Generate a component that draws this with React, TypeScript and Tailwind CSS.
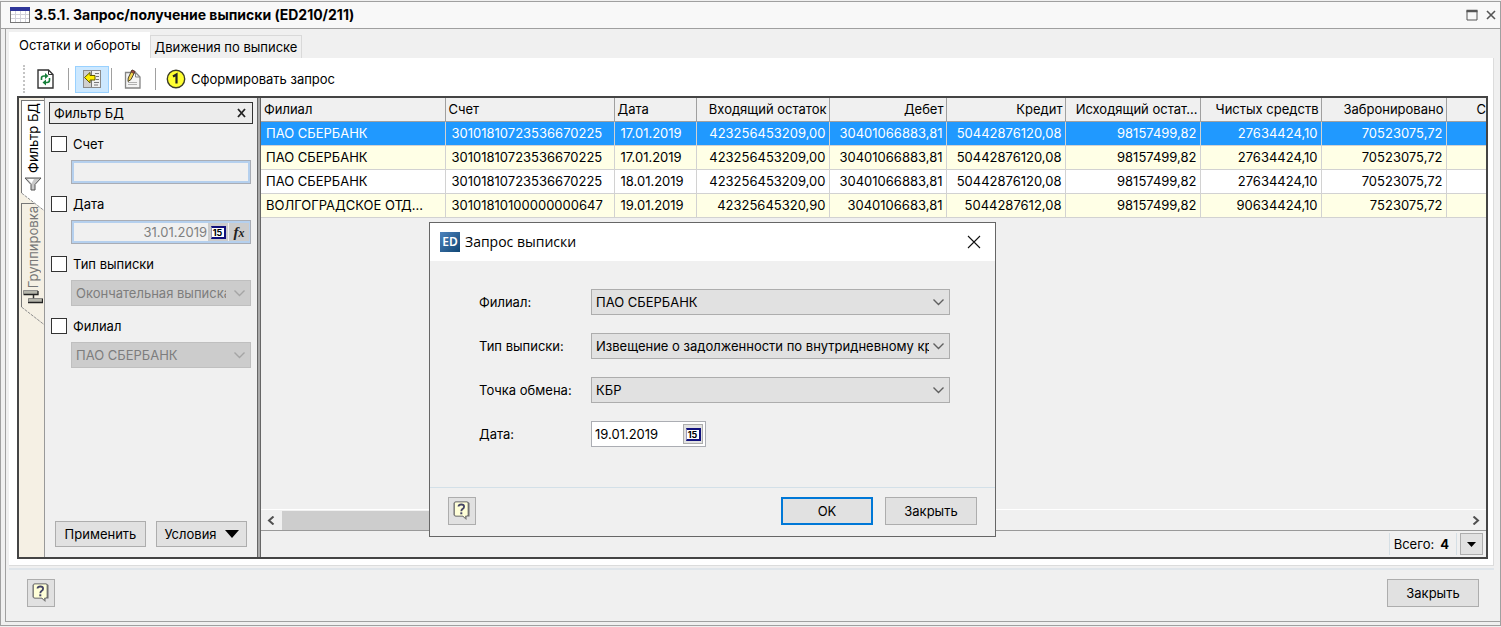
import React, { useState } from "react";

const FONT = "font-['Inter','Noto_Sans',sans-serif] text-[13px] leading-4";
const BUTTON = "flex items-center justify-center border border-[#adadad] bg-[#e1e1e1]";

type Row = { branch: string; values: string[] };

const COLUMNS = [
  { title: "Филиал", width: "w-[184px]" },
  { title: "Счет", width: "w-[169px]" },
  { title: "Дата", width: "w-[82px]" },
  { title: "Входящий остаток", width: "w-[133px]" },
  { title: "Дебет", width: "w-[117px]" },
  { title: "Кредит", width: "w-[119px]" },
  { title: "Исходящий остат...", width: "w-[135px]" },
  { title: "Чистых средств", width: "w-[121px]" },
  { title: "Забронировано", width: "w-[125px]" },
];

const ROWS: Row[] = [
  { branch: "ПАО СБЕРБАНК", values: ["30101810723536670225", "17.01.2019", "423256453209,00", "30401066883,81", "50442876120,08", "98157499,82", "27634424,10", "70523075,72"] },
  { branch: "ПАО СБЕРБАНК", values: ["30101810723536670225", "17.01.2019", "423256453209,00", "30401066883,81", "50442876120,08", "98157499,82", "27634424,10", "70523075,72"] },
  { branch: "ПАО СБЕРБАНК", values: ["30101810723536670225", "18.01.2019", "423256453209,00", "30401066883,81", "50442876120,08", "98157499,82", "27634424,10", "70523075,72"] },
  { branch: "ВОЛГОГРАДСКОЕ ОТД...", values: ["30101810100000000647", "19.01.2019", "42325645320,90", "3040106683,81", "5044287612,08", "98157499,82", "90634424,10", "7523075,72"] },
];

function TableIcon() {
  return (
    <svg width="20" height="16" viewBox="0 0 20 16" shapeRendering="crispEdges">
      <rect x="0.5" y="0.5" width="19" height="15" fill="#fff" stroke="#777" />
      <rect x="0" y="0" width="20" height="4" fill="#2f3699" />
      <path d="M1 7.5h18M1 11.5h18M5.5 4v11M10.5 4v11M15.5 4v11" stroke="#d2d2da" />
    </svg>
  );
}

function RefreshIcon() {
  return (
    <svg width="17" height="20" viewBox="0 0 17 20">
      <path d="M1 1h10.500l4.500 4.500V19H1z" fill="#fff" stroke="#333" strokeWidth="1.400" />
      <path d="M11.500 1v4.500H16" fill="none" stroke="#333" />
      <path d="M4.500 11V9Q4.500 7 7 7h1" fill="none" stroke="#17803a" strokeWidth="1.600" />
      <path d="M8 4l3.500 3L8 10z" fill="#17803a" />
      <path d="M12.500 9v2q0 2.500-2.500 2.500H9" fill="none" stroke="#17803a" strokeWidth="1.600" />
      <path d="M9 10.500l-3.500 3L9 16.500z" fill="#17803a" />
    </svg>
  );
}

function PanelIcon() {
  return (
    <svg width="20" height="20" viewBox="0 0 20 20">
      <rect x="1.500" y="1.500" width="17" height="17" fill="#cfcfcf" stroke="#8a8a8a" />
      <rect x="10" y="2" width="8" height="16" fill="#f0f0f0" />
      <path d="M9.500 2v16" stroke="#777" />
      <path d="M13 4.500h4M14 7.500h3M14 10.500h3M12 13.500h5M12 16h4" stroke="#777" />
      <path d="M2.500 8.500L8 3.500V6.500h5v4.500H8v3z" fill="#ffee00" stroke="#5e5800" />
    </svg>
  );
}

function EditIcon() {
  return (
    <svg width="18" height="20" viewBox="0 0 18 20">
      <path d="M1.500 3.500h10l4.500 4.500v11H1.500z" fill="#f4f4f4" stroke="#858585" strokeWidth="1.300" />
      <path d="M11.500 3.500V8H16" fill="none" stroke="#858585" />
      <path d="M4 13.500h9M4 15.500h9" stroke="#b0b0b0" />
      <path d="M8 1l3 1.500-4 8L4 12.500 4.200 9z" fill="#f3d44a" stroke="#4d4630" />
      <path d="M8 1l3 1.500-1 2L7 3z" fill="#a34b3f" stroke="#4d3030" strokeWidth="0.700" />
    </svg>
  );
}

function OneIcon() {
  return (
    <svg width="20" height="20" viewBox="0 0 20 20">
      <circle cx="10" cy="10" r="8.700" fill="#ffff32" stroke="#3c3c28" strokeWidth="1.400" />
      <path d="M7 7.500L10.500 5.500V14.500" fill="none" stroke="#222" strokeWidth="2.200" />
    </svg>
  );
}

function HelpIcon() {
  return (
    <svg width="20" height="22" viewBox="0 0 20 22">
      <path d="M3 1.500h12.500L17.500 3v13.500h-3V20l-4-3.500H3L1.500 15V3z" fill="#6f6f6f" />
      <path d="M3.500 2h11.500L16 3v12l-1 1h-1.500v2.500L11 16H3.500l-1-1V3z" fill="#ffffd8" stroke="#777" strokeWidth="0.800" />
      <path d="M6.500 6.500Q6.500 4.500 9.300 4.500t2.800 2.300q0 1.300-1.600 2.200Q9.300 9.800 9.300 11.200" fill="none" stroke="#444466" strokeWidth="1.800" />
      <rect x="8.300" y="12.300" width="2" height="2" fill="#444466" />
    </svg>
  );
}

function CalendarIcon() {
  return (
    <span className="flex h-[13px] w-[15px] items-center justify-center border-y-2 border-l border-r-2 border-[#10107c] border-l-[#9999bb] bg-white text-[9px] font-bold leading-none text-black">
      15
    </span>
  );
}

function FunnelIcon() {
  return (
    <svg width="18" height="14" viewBox="0 0 18 14">
      <path d="M1 1h16l-6 6.500V13H7V7.500z" fill="#c9c9c9" stroke="#555" />
      <path d="M4 2h6L7.500 6.500z" fill="#fff" />
    </svg>
  );
}

function GroupIcon() {
  return (
    <svg width="20" height="14" viewBox="0 0 20 14">
      <path d="M10.500 4v5" fill="none" stroke="#333" strokeWidth="1.500" />
      <path d="M1 1h14v4H1z" fill="#b5b5ab" />
      <path d="M0.500 4.500h14.500V1" fill="none" stroke="#222" strokeWidth="1.300" />
      <path d="M5 8.500h14v4H5z" fill="#b5b5ab" />
      <path d="M5 12.500h14.500V8.500" fill="none" stroke="#222" strokeWidth="1.300" />
      <path d="M0.500 4V0.500h14.500M5.500 12V8.500h14" fill="none" stroke="#777" strokeWidth="0.800" />
    </svg>
  );
}

function Chevron({ className }: { className: string }) {
  return (
    <svg className={`pointer-events-none absolute right-1.5 top-2.5 ${className}`} width="11" height="8" viewBox="0 0 11 8">
      <path d="M0.500 0.500L5.500 5.500L10.500 0.500" fill="none" stroke="currentColor" strokeWidth="1.400" />
    </svg>
  );
}

function SlantEdge() {
  return (
    <svg className="block" width="23" height="18" viewBox="0 0 23 18">
      <path d="M0 0H23V18z" fill="currentColor" />
      <path d="M0.500 0L23 17.500" stroke="#8c8c8c" strokeDasharray="3 1" />
    </svg>
  );
}

function FilterCheck({ id, label }: { id: string; label: string }) {
  return (
    <div className="mt-3 flex h-4 items-center gap-1.5">
      <input id={id} type="checkbox" className="m-0 size-4 appearance-none border border-[#333] bg-white checked:bg-[#555]" />
      <label htmlFor={id}>{label}</label>
    </div>
  );
}

function FilterSelect({ label, value }: { label: string; value: string }) {
  return (
    <div className="relative ml-5 mt-2 h-[26px]">
      <select aria-label={label} disabled className="h-full w-full appearance-none border border-[#bfbfbf] bg-[#ccc] pl-1 pr-6 text-[#7d7d7d] opacity-100">
        <option>{value}</option>
      </select>
      <Chevron className="text-[#a5a5a5]" />
    </div>
  );
}

function DialogSelect({ id, label, value }: { id: string; label: string; value: string }) {
  return (
    <>
      <label htmlFor={id}>{label}</label>
      <div className="relative h-[26px]">
        <select id={id} className="h-full w-full appearance-none border border-[#adadad] bg-[#e1e1e1] pl-1 pr-5 text-black">
          <option>{value}</option>
        </select>
        <Chevron className="text-[#606060]" />
      </div>
    </>
  );
}

function Toolbar() {
  return (
    <div className="flex h-[38px] items-center pl-[14px] pt-1">
      <span className="h-7 border-l-2 border-dotted border-[#c4c4c4]" />
      <button aria-label="Обновить" className="ml-3"><RefreshIcon /></button>
      <span className="ml-3.5 h-[22px] w-px bg-[#a0a0a0]" />
      <button aria-label="Панель фильтра" className="ml-1.5 flex h-[27px] w-[34px] items-center justify-center border border-[#99d1ff] bg-[#cce8ff]">
        <PanelIcon />
      </button>
      <span className="ml-0.5 h-[22px] w-px bg-[#a0a0a0]" />
      <button aria-label="Редактировать" className="ml-3"><EditIcon /></button>
      <span className="ml-[13px] h-[22px] w-px bg-[#a0a0a0]" />
      <button className="ml-2.5 flex items-center gap-[5px]"><OneIcon />Сформировать запрос</button>
    </div>
  );
}

function SideTabs() {
  return (
    <div className="w-[26px] shrink-0 border-r border-[#999] bg-[#f5f0e4] pl-0.5 pt-0.5">
      <button className="relative z-10 block text-white">
        <span className="flex h-[93px] w-[23px] flex-col items-center gap-1 border-l border-t border-[#777] bg-white pt-0.5 text-black">
          <span className="rotate-180 [writing-mode:vertical-rl]">Фильтр БД</span>
          <FunnelIcon />
        </span>
        <SlantEdge />
      </button>
      <button className="-mt-2 block text-[#f5f0e4]">
        <span className="flex h-[104px] w-[23px] flex-col items-center gap-0.5 border-l border-t border-[#777] pt-0.5 text-[#777]">
          <span className="rotate-180 [writing-mode:vertical-rl]">Группировка</span>
          <GroupIcon />
        </span>
        <SlantEdge />
      </button>
    </div>
  );
}

function FilterPanel() {
  return (
    <aside className="flex w-[212px] shrink-0 flex-col px-1 pt-1">
      <header className="flex h-[22px] items-center justify-between border border-[#333] bg-[#ececec] px-1">
        Фильтр БД
        <button aria-label="Закрыть фильтр">
          <svg width="12" height="10" viewBox="0 0 12 10"><path d="M2 1l7 8M9 1L2 9" stroke="#222" strokeWidth="1.800" /></svg>
        </button>
      </header>
      <div className="flex flex-1 flex-col px-0.5">
        <FilterCheck id="f-account" label="Счет" />
        <input aria-label="Значение счета" className="ml-5 mt-2 h-6 border border-[#a9adb5] bg-[#f0f0f0] px-1 shadow-[inset_0_0_0_2px_#b5d0ee]" />
        <FilterCheck id="f-date" label="Дата" />
        <div className="ml-5 mt-2 flex h-6 items-center border border-[#a9adb5] shadow-[inset_0_0_0_2px_#b5d0ee]">
          <input aria-label="Значение даты" defaultValue="31.01.2019" className="min-w-0 flex-1 bg-transparent text-right text-[#808080]" />
          <button aria-label="Календарь" className="ml-px flex h-[18px] w-5 items-center justify-center bg-[#ccc]"><CalendarIcon /></button>
          <button aria-label="Формула" className="mx-px h-[18px] w-5 bg-[#ccc] font-['Liberation_Serif',serif] text-[15px] font-bold italic leading-4 text-[#222]">
            f<span className="text-[12px]">x</span>
          </button>
        </div>
        <FilterCheck id="f-type" label="Тип выписки" />
        <FilterSelect label="Значение типа выписки" value="Окончательная выписка" />
        <FilterCheck id="f-branch" label="Филиал" />
        <FilterSelect label="Значение филиала" value="ПАО СБЕРБАНК" />
        <div className="mb-2.5 mt-auto flex justify-between pl-1 pr-1">
          <button className={`h-[26px] w-[91px] ${BUTTON}`}>Применить</button>
          <button className={`h-[26px] w-[91px] gap-2 ${BUTTON}`}>
            Условия
            <svg width="14" height="8" viewBox="0 0 14 8"><path d="M0 0h14L7 8z" /></svg>
          </button>
        </div>
      </div>
    </aside>
  );
}

function StatementTable() {
  const [selected, setSelected] = useState(0);
  return (
    <div className="min-h-0 flex-1 overflow-hidden">
      <table className="w-full table-fixed border-collapse">
        <colgroup>
          {COLUMNS.map((c) => <col key={c.title} className={c.width} />)}
          <col />
        </colgroup>
        <thead>
          <tr className="h-[23px]">
            {COLUMNS.map((c, i) => (
              <th key={c.title} className={`whitespace-nowrap border-b border-r border-[#a0a0a0] p-0 font-normal ${i < 3 ? "pl-[3px] text-left" : "pr-0.5 text-right"}`}>
                {c.title}
              </th>
            ))}
            <th className="border-b border-[#a0a0a0] p-0 text-right font-normal">С</th>
          </tr>
        </thead>
        <tbody>
          {ROWS.map((row, r) => (
            <tr
              key={r}
              onClick={() => setSelected(r)}
              className={`h-6 ${r === selected ? "bg-[#2099ff] text-white" : r % 2 ? "bg-[#ffffe6]" : "bg-white"}`}
            >
              <td className="whitespace-nowrap border-b border-r border-[#d2d2d2] p-0 pl-[5px]">{row.branch}</td>
              {row.values.map((v, i) => (
                <td key={i} className={`border-b border-r border-[#d2d2d2] p-0 ${i < 2 ? "pl-1.5" : "pr-[3px] text-right"}`}>{v}</td>
              ))}
              <td className="border-b border-[#d2d2d2] p-0" />
            </tr>
          ))}
        </tbody>
      </table>
    </div>
  );
}

function GridFooter() {
  return (
    <>
      <div className="flex h-[22px] items-center border-b border-t border-b-[#999] border-t-white">
        <svg className="ml-1.5 shrink-0" width="8" height="9" viewBox="0 0 8 9"><path d="M6.500 0.500L2 4.500l4.500 4" fill="none" stroke="#505050" strokeWidth="2" /></svg>
        <div className="ml-[7px] h-[19px] w-1/2 bg-[#cdcdcd]" />
        <svg className="ml-auto mr-1.5 shrink-0" width="8" height="9" viewBox="0 0 8 9"><path d="M1.500 0.500L6 4.500l-4.500 4" fill="none" stroke="#505050" strokeWidth="2" /></svg>
      </div>
      <div className="flex h-[26px] items-center justify-end pr-[3px]">
        <span className="flex h-[22px] items-center gap-1.5 border-x border-[#d5dfe5] px-1 pr-[7px]">Всего: <b>4</b></span>
        <button aria-label="Навигация" className={`ml-[3px] h-[22px] w-[23px] ${BUTTON}`}>
          <svg width="9" height="5" viewBox="0 0 9 5"><path d="M0 0h9L4.500 5z" /></svg>
        </button>
      </div>
    </>
  );
}

function RequestDialog() {
  return (
    <div role="dialog" aria-labelledby="dlg-title" className="absolute left-[429px] top-[222px] z-20 w-[567px] border border-[#666] bg-[#f0f0f0]">
      <header className="flex h-[38px] items-center bg-white pl-[10px] pr-3.5">
        <span className="flex size-5 items-center justify-center bg-linear-to-br from-[#4d83bd] to-[#0f4775] font-['Noto_Sans',sans-serif] text-[12px] font-semibold text-white">ED</span>
        <h2 id="dlg-title" className="ml-[5px] font-['Open_Sans',sans-serif] text-[14px]">Запрос выписки</h2>
        <button aria-label="Закрыть окно" className="ml-auto">
          <svg width="14" height="14" viewBox="0 0 14 14"><path d="M1 1l12 12M13 1L1 13" stroke="#111" strokeWidth="1.100" /></svg>
        </button>
      </header>
      <div className="grid grid-cols-[112px_1fr] items-center gap-y-[18px] pb-10 pl-[49px] pr-[45px] pt-7">
        <DialogSelect id="d-branch" label="Филиал:" value="ПАО СБЕРБАНК" />
        <DialogSelect id="d-type" label="Тип выписки:" value="Извещение о задолженности по внутридневному кредиту" />
        <DialogSelect id="d-point" label="Точка обмена:" value="КБР" />
        <label htmlFor="d-date">Дата:</label>
        <div className="flex h-[26px] w-[115px] items-center border border-[#abadb3] bg-white pr-0.5">
          <input id="d-date" defaultValue="19.01.2019" className="min-w-0 flex-1 bg-transparent pl-[3px]" />
          <button aria-label="Выбрать дату" className={`h-5 w-5 ${BUTTON}`}><CalendarIcon /></button>
        </div>
      </div>
      <footer className="flex border-t border-[#d3e0e8] px-[18px] pb-[11px] pt-[9px]">
        <button aria-label="Справка" className={`size-7 ${BUTTON}`}><HelpIcon /></button>
        <button className="ml-auto h-7 w-[92px] border-2 border-[#0078d7] bg-[#e1e1e1]">OK</button>
        <button className={`ml-3 h-7 w-[92px] ${BUTTON}`}>Закрыть</button>
      </footer>
    </div>
  );
}

export default function App() {
  return (
    <div className={`relative flex min-h-screen flex-col bg-[#f0f0f0] pb-px pt-px text-black ${FONT}`}>
      <div className="flex flex-1 flex-col border border-[#a0a0a0]">
        <header className="flex h-[27px] items-center border-b border-[#a0a0a0] bg-[#f8f8f8] pl-[9px] pr-1">
          <TableIcon />
          <h1 className="ml-1 text-[14px] font-bold">3.5.1. Запрос/получение выписки (ED210/211)</h1>
          <button aria-label="Развернуть" className="ml-auto">
            <svg width="12" height="12" viewBox="0 0 12 12"><path d="M1 1.500h10v9.500H1z" fill="none" stroke="#555" /><path d="M0.500 2h11" stroke="#555" strokeWidth="2.500" /></svg>
          </button>
          <button aria-label="Закрыть программу" className="ml-2">
            <svg width="10" height="10" viewBox="0 0 10 10"><path d="M1 1l8 8M9 1L1 9" stroke="#555" strokeWidth="1.600" /></svg>
          </button>
        </header>

        <div className="mb-[3px] ml-1 flex flex-1 flex-col border-b border-l border-[#a0a0a0] pl-[3px] pr-1.5 pt-[3px]">
          <div className="flex h-[26px] items-end">
            <button className="h-[26px] bg-white pl-2.5 pr-[9px]">Остатки и обороты</button>
            <button className="h-[23px] border border-b-0 border-[#d9d9d9] px-1">Движения по выписке</button>
          </div>
          <main className="flex flex-1 flex-col border-b border-r border-[#dcdcdc] bg-white pb-1.5 pr-[5px]">
            <Toolbar />
            <div className="ml-2 flex flex-1 border-2 border-[#444] bg-[#f0f0f0]">
              <SideTabs />
              <FilterPanel />
              <div className="w-1 shrink-0 border-x border-[#666] bg-[#aaa]" />
              <section className="flex min-w-0 flex-1 flex-col">
                <StatementTable />
                <GridFooter />
              </section>
            </div>
          </main>
          <footer className="mt-0.5 flex justify-between border-t-2 border-[#dfe5ea] pb-3.5 pl-[18px] pr-[15px] pt-[9px]">
            <button aria-label="Справка по программе" className={`size-7 ${BUTTON}`}><HelpIcon /></button>
            <button className={`h-7 w-[92px] ${BUTTON}`}>Закрыть</button>
          </footer>
        </div>
      </div>
      <RequestDialog />
    </div>
  );
}
